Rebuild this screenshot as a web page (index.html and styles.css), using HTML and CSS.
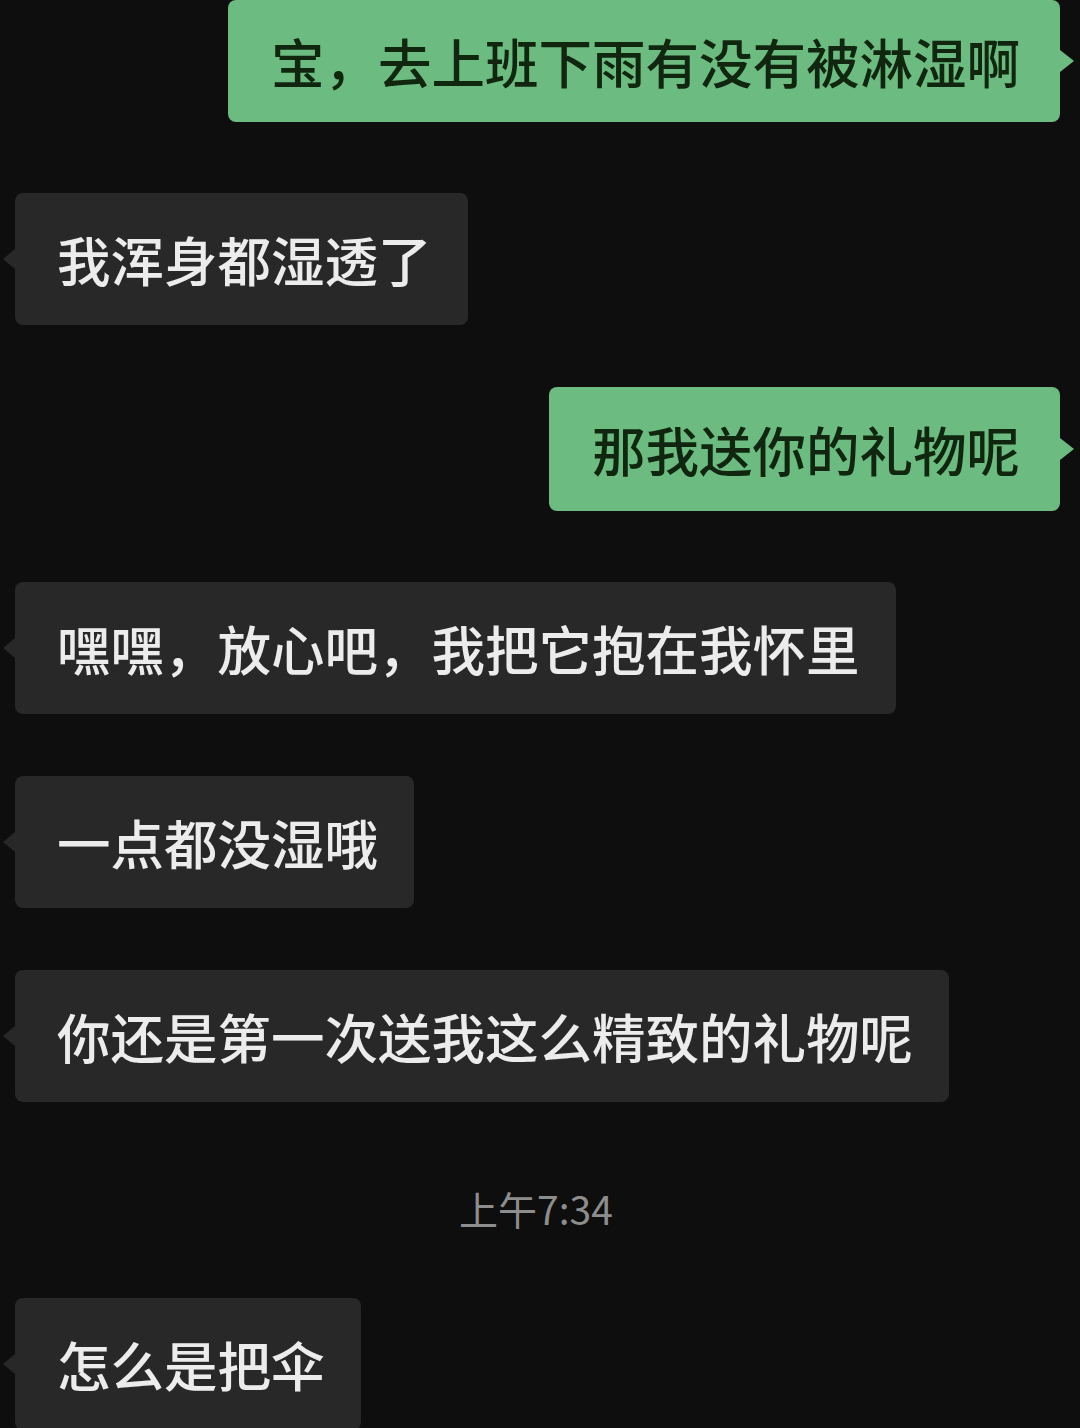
FILE: index.html
```html
<!DOCTYPE html>
<html lang="zh-CN">
<head>
<meta charset="utf-8">
<link rel="stylesheet" href="styles.css">
</head>
<body>
<div class="chat">
  <div class="row right first"><div class="bubble green b-first">宝，去上班下雨有没有被淋湿啊</div></div>
  <div class="row left after-green"><div class="bubble gray">我浑身都湿透了</div></div>
  <div class="row right"><div class="bubble green">那我送你的礼物呢</div></div>
  <div class="row left after-green"><div class="bubble gray">嘿嘿，放心吧，我把它抱在我怀里</div></div>
  <div class="row left"><div class="bubble gray">一点都没湿哦</div></div>
  <div class="row left"><div class="bubble gray">你还是第一次送我这么精致的礼物呢</div></div>
  <div class="time">上午7:34</div>
  <div class="row left"><div class="bubble gray">怎么是把伞</div></div>
</div>
</body>
</html>
```
FILE: styles.css
```css
html, body {
  margin: 0;
  padding: 0;
  background: #0e0e0e;
  width: 1080px;
  height: 1428px;
  overflow: hidden;
}
.chat {
  display: flex;
  flex-direction: column;
  font-family: "Noto Sans CJK SC", "Noto Sans", sans-serif;
}
.row {
  display: flex;
  margin-top: 62px;
}
.row.first { margin-top: 0; }
.row.after-green { margin-top: 71px; }
.row.left { justify-content: flex-start; padding-left: 15px; }
.row.right { justify-content: flex-end; padding-right: 20px; }
.bubble {
  position: relative;
  display: flex;
  align-items: center;
  font-size: 53.5px;
  font-weight: 500;
  line-height: 1;
  border-radius: 8px;
  white-space: nowrap;
}
.gray {
  background: #282828;
  color: #ececec;
  height: 132px;
  padding: 0 36px 0 42px;
  box-sizing: border-box;
}
.green {
  background: #6cbb80;
  color: #10260f;
  height: 124px;
  padding: 0 40px 0 43px;
  box-sizing: border-box;
}
.b-first { height: 122px; }
.gray::before {
  content: "";
  position: absolute;
  left: -12px;
  top: 50%;
  margin-top: -10px;
  border-style: solid;
  border-width: 10px 12px 10px 0;
  border-color: transparent #282828 transparent transparent;
}
.green::after {
  content: "";
  position: absolute;
  right: -14px;
  top: 50%;
  margin-top: -11px;
  border-style: solid;
  border-width: 11px 0 11px 14px;
  border-color: transparent transparent transparent #6cbb80;
}
.time {
  align-self: center;
  margin-top: 87px;
  margin-bottom: 9px;
  height: 38px;
  line-height: 38px;
  font-size: 39px;
  color: #8d8d8d;
  padding-right: 8px;
  font-family: "Noto Sans CJK SC", Roboto, sans-serif;
}
```
